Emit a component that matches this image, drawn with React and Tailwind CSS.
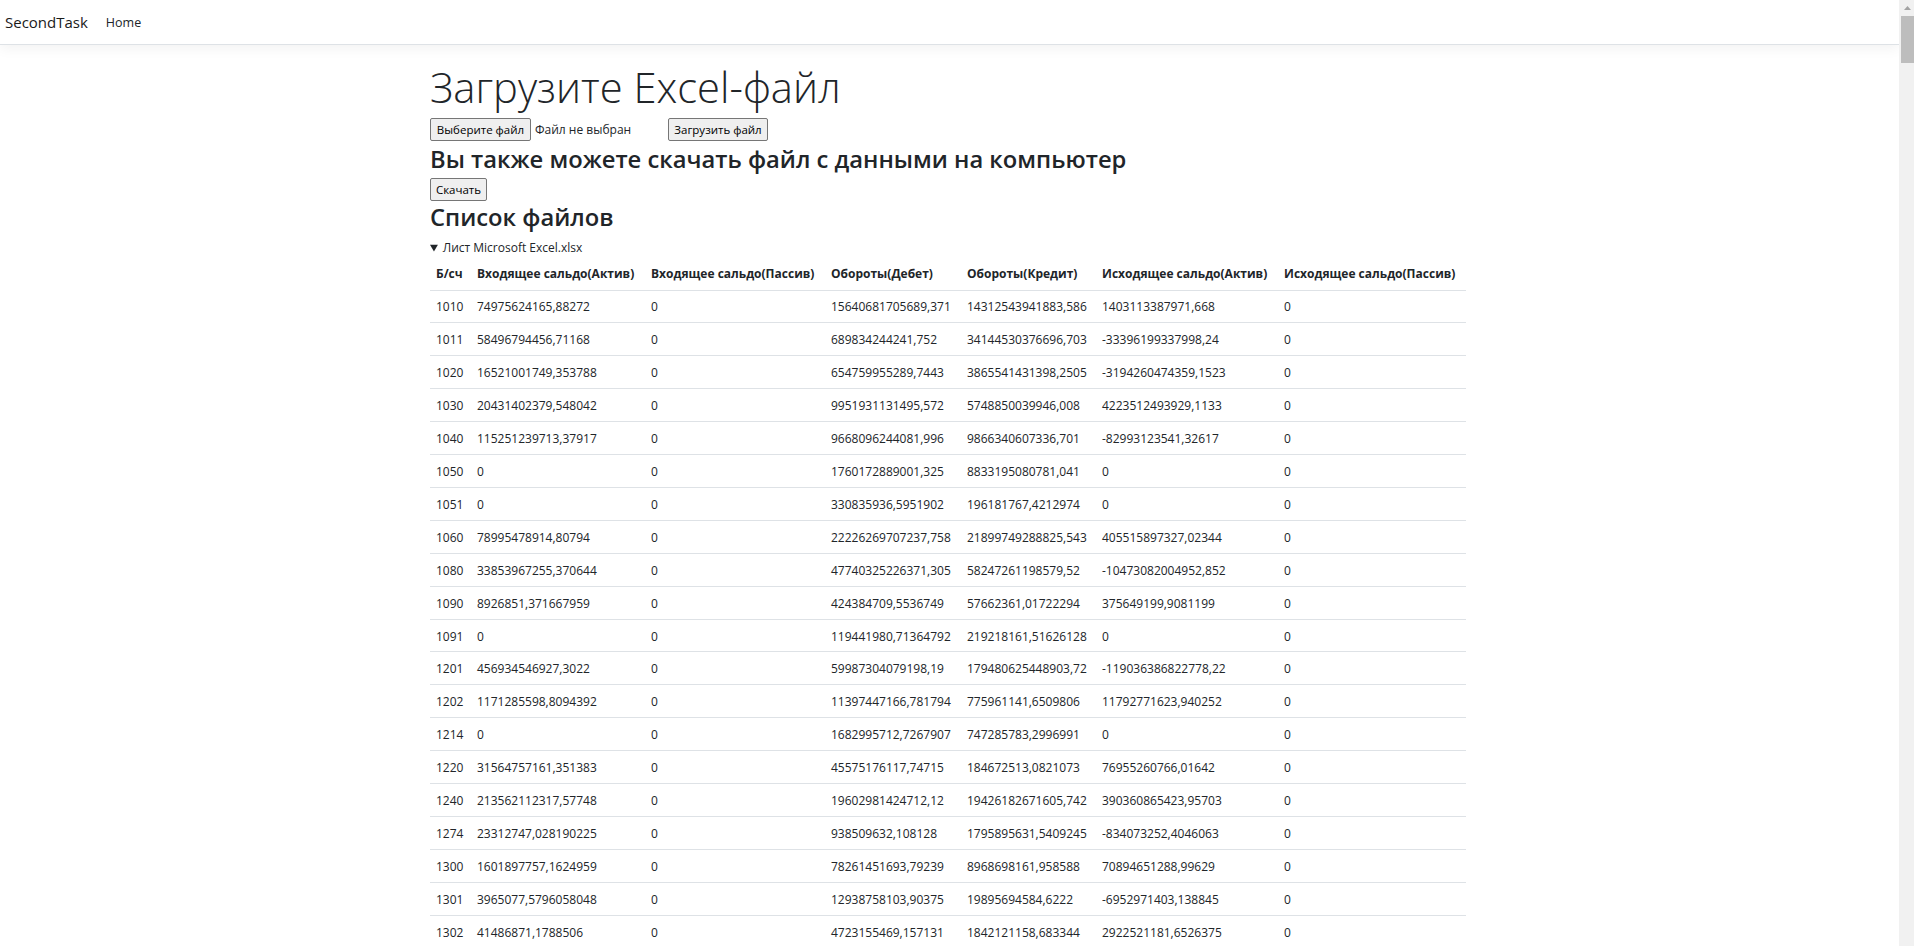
const COLUMNS = [
  { title: 'Б/сч', width: 'w-[41px]' },
  { title: 'Входящее сальдо(Актив)', width: 'w-[174px]' },
  { title: 'Входящее сальдо(Пассив)', width: 'w-[180px]' },
  { title: 'Обороты(Дебет)', width: 'w-[136px]' },
  { title: 'Обороты(Кредит)', width: 'w-[135px]' },
  { title: 'Исходящее сальдо(Актив)', width: 'w-[182px]' },
  { title: 'Исходящее сальдо(Пассив)', width: 'w-[188px]' },
]

const ROWS = [
  ['1010', '74975624165,88272', '0', '15640681705689,371', '14312543941883,586', '1403113387971,668', '0'],
  ['1011', '58496794456,71168', '0', '689834244241,752', '34144530376696,703', '-33396199337998,24', '0'],
  ['1020', '16521001749,353788', '0', '654759955289,7443', '3865541431398,2505', '-3194260474359,1523', '0'],
  ['1030', '20431402379,548042', '0', '9951931131495,572', '5748850039946,008', '4223512493929,1133', '0'],
  ['1040', '115251239713,37917', '0', '9668096244081,996', '9866340607336,701', '-82993123541,32617', '0'],
  ['1050', '0', '0', '1760172889001,325', '8833195080781,041', '0', '0'],
  ['1051', '0', '0', '330835936,5951902', '196181767,4212974', '0', '0'],
  ['1060', '78995478914,80794', '0', '22226269707237,758', '21899749288825,543', '405515897327,02344', '0'],
  ['1080', '33853967255,370644', '0', '47740325226371,305', '58247261198579,52', '-10473082004952,852', '0'],
  ['1090', '8926851,371667959', '0', '424384709,5536749', '57662361,01722294', '375649199,9081199', '0'],
  ['1091', '0', '0', '119441980,71364792', '219218161,51626128', '0', '0'],
  ['1201', '456934546927,3022', '0', '59987304079198,19', '179480625448903,72', '-119036386822778,22', '0'],
  ['1202', '1171285598,8094392', '0', '11397447166,781794', '775961141,6509806', '11792771623,940252', '0'],
  ['1214', '0', '0', '1682995712,7267907', '747285783,2996991', '0', '0'],
  ['1220', '31564757161,351383', '0', '45575176117,74715', '184672513,0821073', '76955260766,01642', '0'],
  ['1240', '213562112317,57748', '0', '19602981424712,12', '19426182671605,742', '390360865423,95703', '0'],
  ['1274', '23312747,028190225', '0', '938509632,108128', '1795895631,5409245', '-834073252,4046063', '0'],
  ['1300', '1601897757,1624959', '0', '78261451693,79239', '8968698161,958588', '70894651288,99629', '0'],
  ['1301', '3965077,5796058048', '0', '12938758103,90375', '19895694584,6222', '-6952971403,138845', '0'],
  ['1302', '41486871,1788506', '0', '4723155469,157131', '1842121158,683344', '2922521181,6526375', '0'],
]

const BUTTON = 'h-[23px] rounded-[2px] border border-[#767676] bg-[#efefef] px-0 text-[11.5px] leading-none whitespace-nowrap text-black'

export default function App() {
  return (
    <div className="flex h-screen overflow-hidden bg-white font-['Open_Sans',sans-serif] text-[#212529]">
      <div className="w-[1899px] shrink-0">
        <nav className="flex h-[45px] items-center border-b border-[#dee2e6] pl-[5px] shadow-[0_4px_12px_rgba(0,0,0,0.05)]">
          <a className="text-[15px] text-[#1a1a1a]">SecondTask</a>
          <a className="ml-[18px] pt-[2px] text-[12.5px] text-[#212529]">Home</a>
        </nav>

        <main className="ml-[430px] w-[1036px] pt-[12px]">
          <h1 className="h-[61px] text-[41.75px] leading-[60px] font-light">Загрузите Excel-файл</h1>

          <form className="flex h-[23px] items-center">
            <button type="button" className={`${BUTTON} w-[101px]`}>Выберите файл</button>
            <span className="ml-[4px] w-[133px] text-[12px]">Файл не выбран</span>
            <button type="button" className={`${BUTTON} w-[100px]`}>Загрузить файл</button>
          </form>

          <h3 className="text-[23.75px] leading-[37px] font-semibold">Вы также можете скачать файл с данными на компьютер</h3>
          <button type="button" className={`${BUTTON} block w-[57px]`}>Скачать</button>
          <h3 className="pb-[4px] text-[23.75px] leading-[33px] font-semibold">Список файлов</h3>

          <details open>
            <summary className="h-[20px] text-[12px] leading-[20px]">Лист Microsoft Excel.xlsx</summary>
            <table className="w-[1036px] table-fixed border-collapse text-[12px]">
              <thead>
                <tr className="h-[32px] border-b border-[#dee2e6]">
                  {COLUMNS.map((col) => (
                    <th key={col.title} className={`${col.width} px-[6px] text-left font-bold whitespace-nowrap`}>
                      {col.title}
                    </th>
                  ))}
                </tr>
              </thead>
              <tbody>
                {ROWS.map((row) => (
                  <tr key={row[0]} className="h-[32.92px] border-b border-[#dee2e6]">
                    {row.map((cell, i) => (
                      <td key={i} className="px-[6px] pt-[2px] whitespace-nowrap">{cell}</td>
                    ))}
                  </tr>
                ))}
              </tbody>
            </table>
          </details>
        </main>
      </div>

      <div className="w-[15px] shrink-0 bg-[#f1f1f1]">
        <svg className="mt-[6px] ml-[5px] block" width="7" height="4" viewBox="0 0 7 4">
          <path d="M3.5 0L7 4H0z" fill="#a3a3a3" />
        </svg>
        <div className="mt-[6px] ml-[2px] h-[47px] w-[13px] bg-[#bdbdbd]" />
      </div>
    </div>
  )
}
